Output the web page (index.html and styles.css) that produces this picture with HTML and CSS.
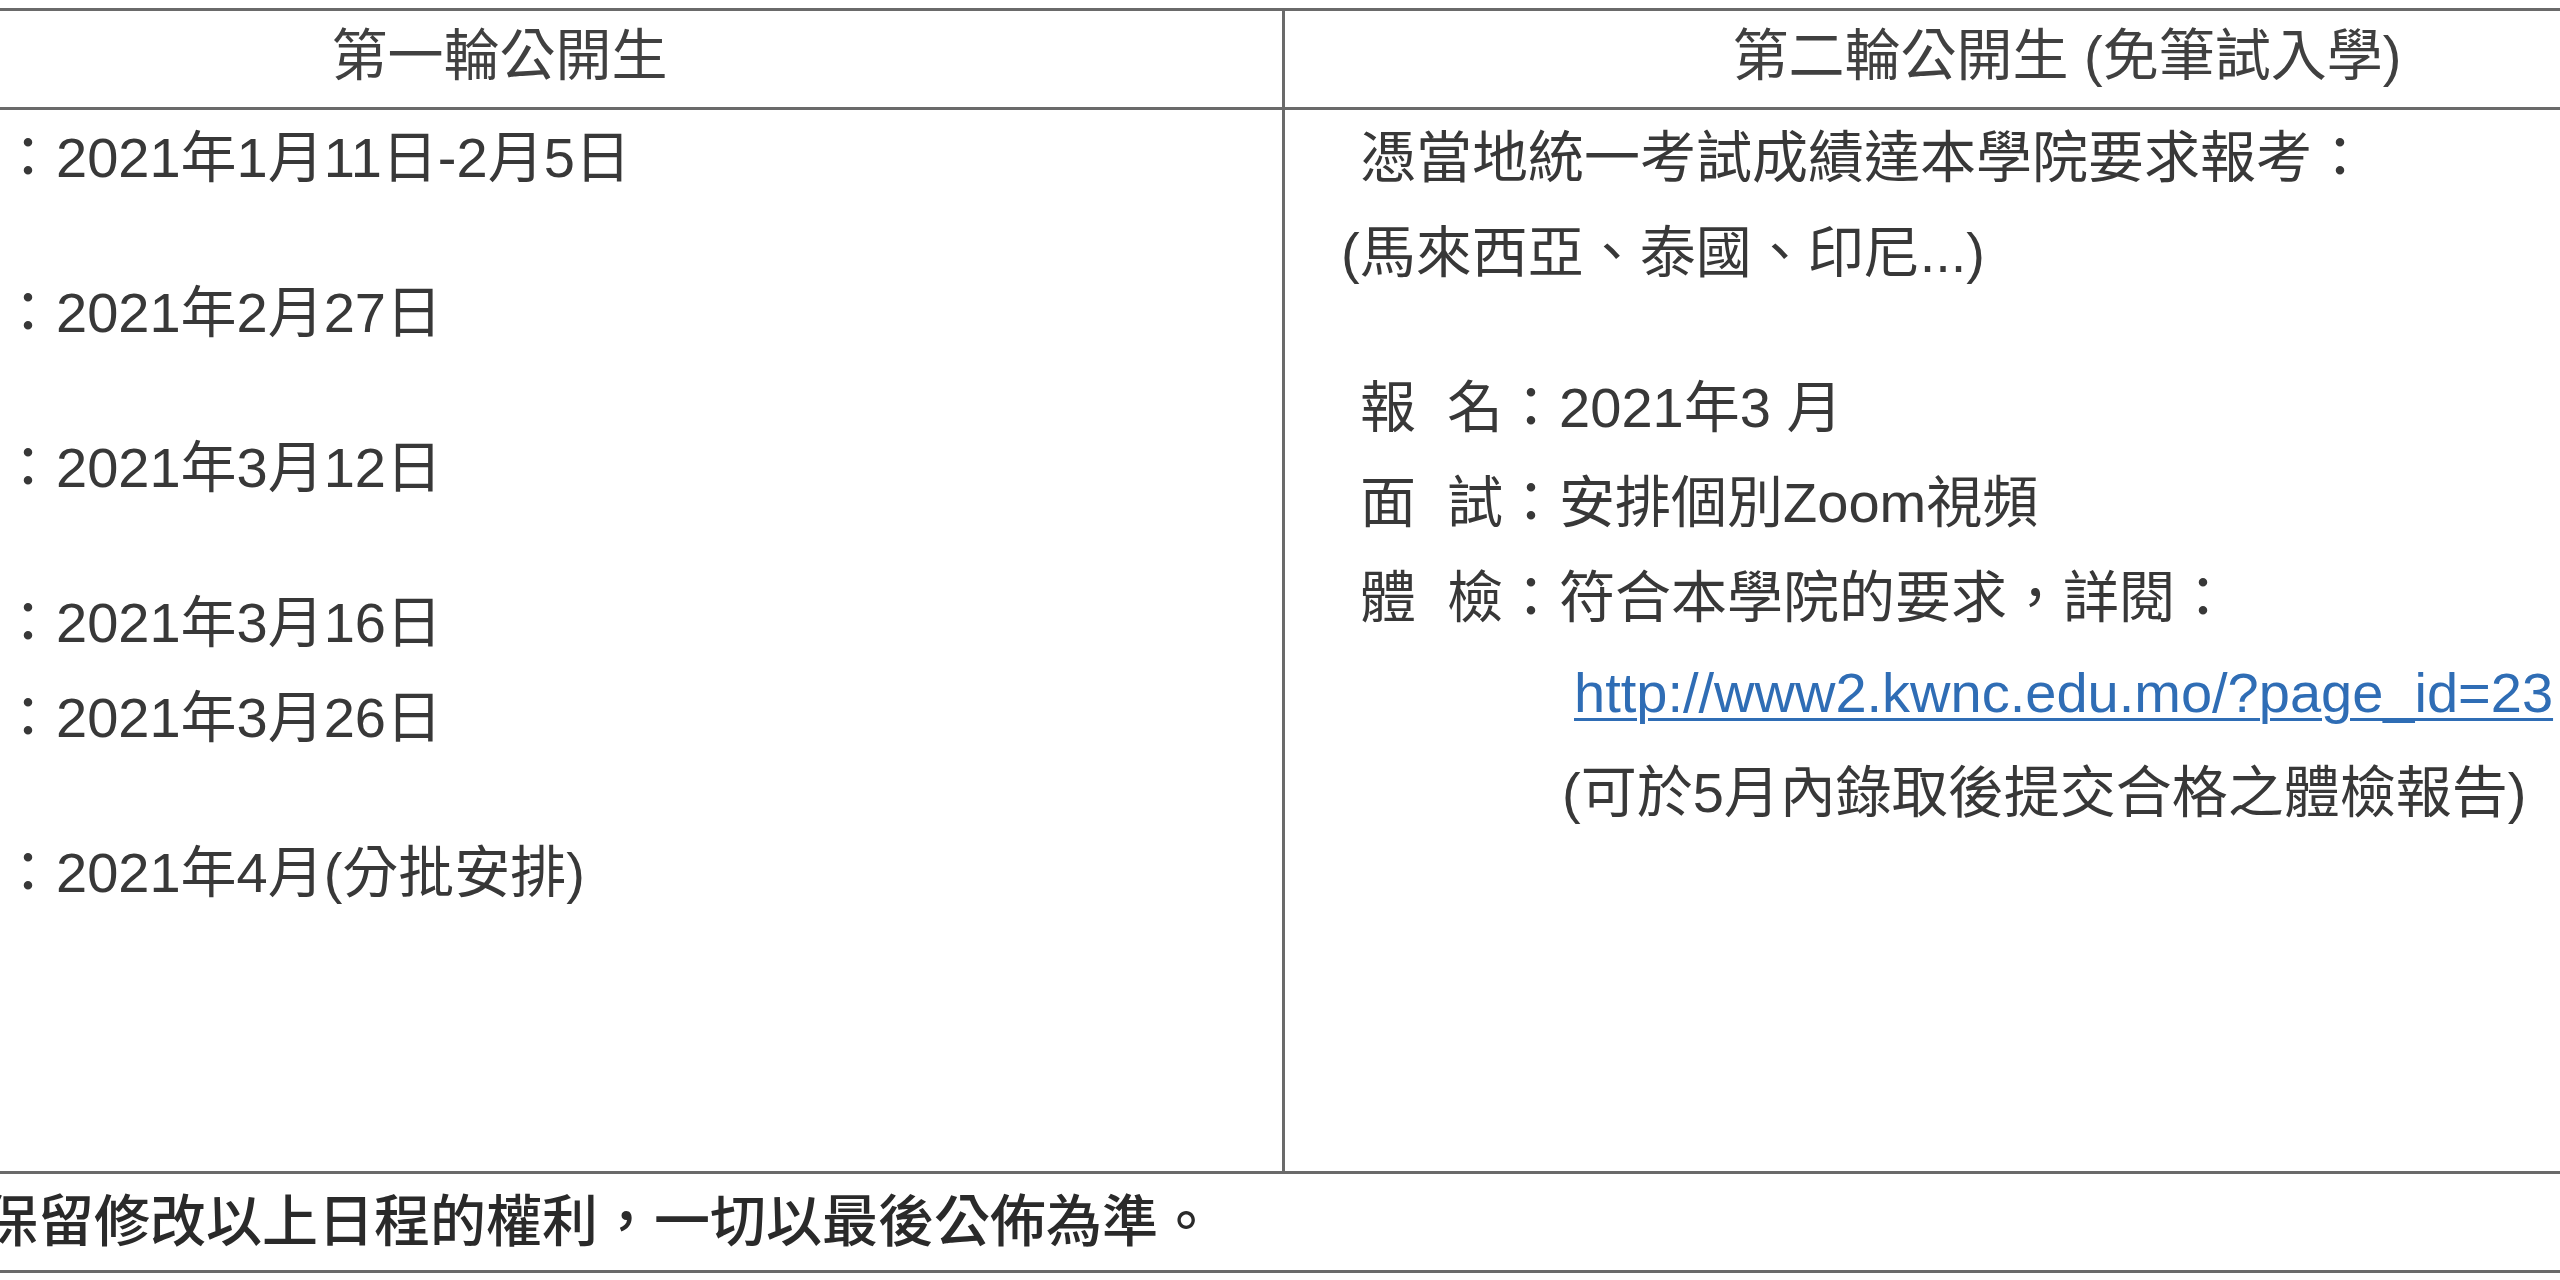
FILE: index.html
```html
<!DOCTYPE html>
<html lang="zh-Hant">
<head>
<meta charset="utf-8">
<title>公開生日程</title>
<link rel="stylesheet" href="styles.css">
</head>
<body>
<div class="sheet">
  <div class="row head">
    <div class="cell left">第一輪公開生</div>
    <div class="cell">第二輪公開生 (免筆試入學)</div>
  </div>
  <div class="row main">
    <div class="cell left col-l">
      <p class="line">：2021年1月11日-2月5日</p>
      <p class="line gap">：2021年2月27日</p>
      <p class="line gap">：2021年3月12日</p>
      <p class="line gap">：2021年3月16日</p>
      <p class="line">：2021年3月26日</p>
      <p class="line gap">：2021年4月(分批安排)</p>
    </div>
    <div class="cell col-r">
      <p class="line">憑當地統一考試成績達本學院要求報考：</p>
      <p class="line out">(馬來西亞、泰國、印尼...)</p>
      <p class="line gap">報&nbsp;&nbsp;名：2021年3 月</p>
      <p class="line">面&nbsp;&nbsp;試：安排個別Zoom視頻</p>
      <p class="line">體&nbsp;&nbsp;檢：符合本學院的要求，詳閱：</p>
      <p class="line url"><a href="#">http://www2.kwnc.edu.mo/?page_id=23</a></p>
      <p class="line note">(可於5月內錄取後提交合格之體檢報告)</p>
    </div>
  </div>
  <div class="foot">保留修改以上日程的權利，一切以最後公佈為準。</div>
</div>
</body>
</html>
```

FILE: styles.css
```css
html, body {
  margin: 0;
  padding: 0;
  background: #ffffff;
}

body {
  width: 2560px;
  height: 1280px;
  overflow: hidden;
  font-family: "Liberation Sans", "Noto Sans CJK TC", sans-serif;
  font-size: 56px;
  color: #383838;
}

.sheet {
  width: 3132px;
  margin-left: -283px;
  margin-top: 8px;
  border-top: 3px solid #6a6a6a;
  border-bottom: 3px solid #6a6a6a;
}

.row {
  display: grid;
  grid-template-columns: 1568px 1fr;
}

.left {
  border-right: 3px solid #6a6a6a;
}

.head {
  height: 96px;
  border-bottom: 3px solid #6a6a6a;
}

.head .cell {
  text-align: center;
  line-height: 90px;
  white-space: nowrap;
  color: #404040;
}

.main {
  height: 1061px;
}

.col-l {
  padding-left: 283px;
}

.col-r {
  padding-left: 75px;
}

.line {
  margin: 0;
  line-height: 95px;
  white-space: nowrap;
}

.gap {
  margin-top: 60px;
}

.out {
  margin-left: -19px;
}

.url {
  margin-left: 214px;
}

.url a {
  color: #2f6db5;
  text-decoration: underline;
  text-decoration-thickness: 3px;
  text-underline-offset: 6px;
}

.note {
  margin-top: 5px;
  margin-left: 202px;
}

.foot {
  border-top: 3px solid #6a6a6a;
  height: 96px;
  line-height: 96px;
  padding-left: 265px;
  font-weight: 500;
  color: #2a2a2a;
  white-space: nowrap;
}
```
